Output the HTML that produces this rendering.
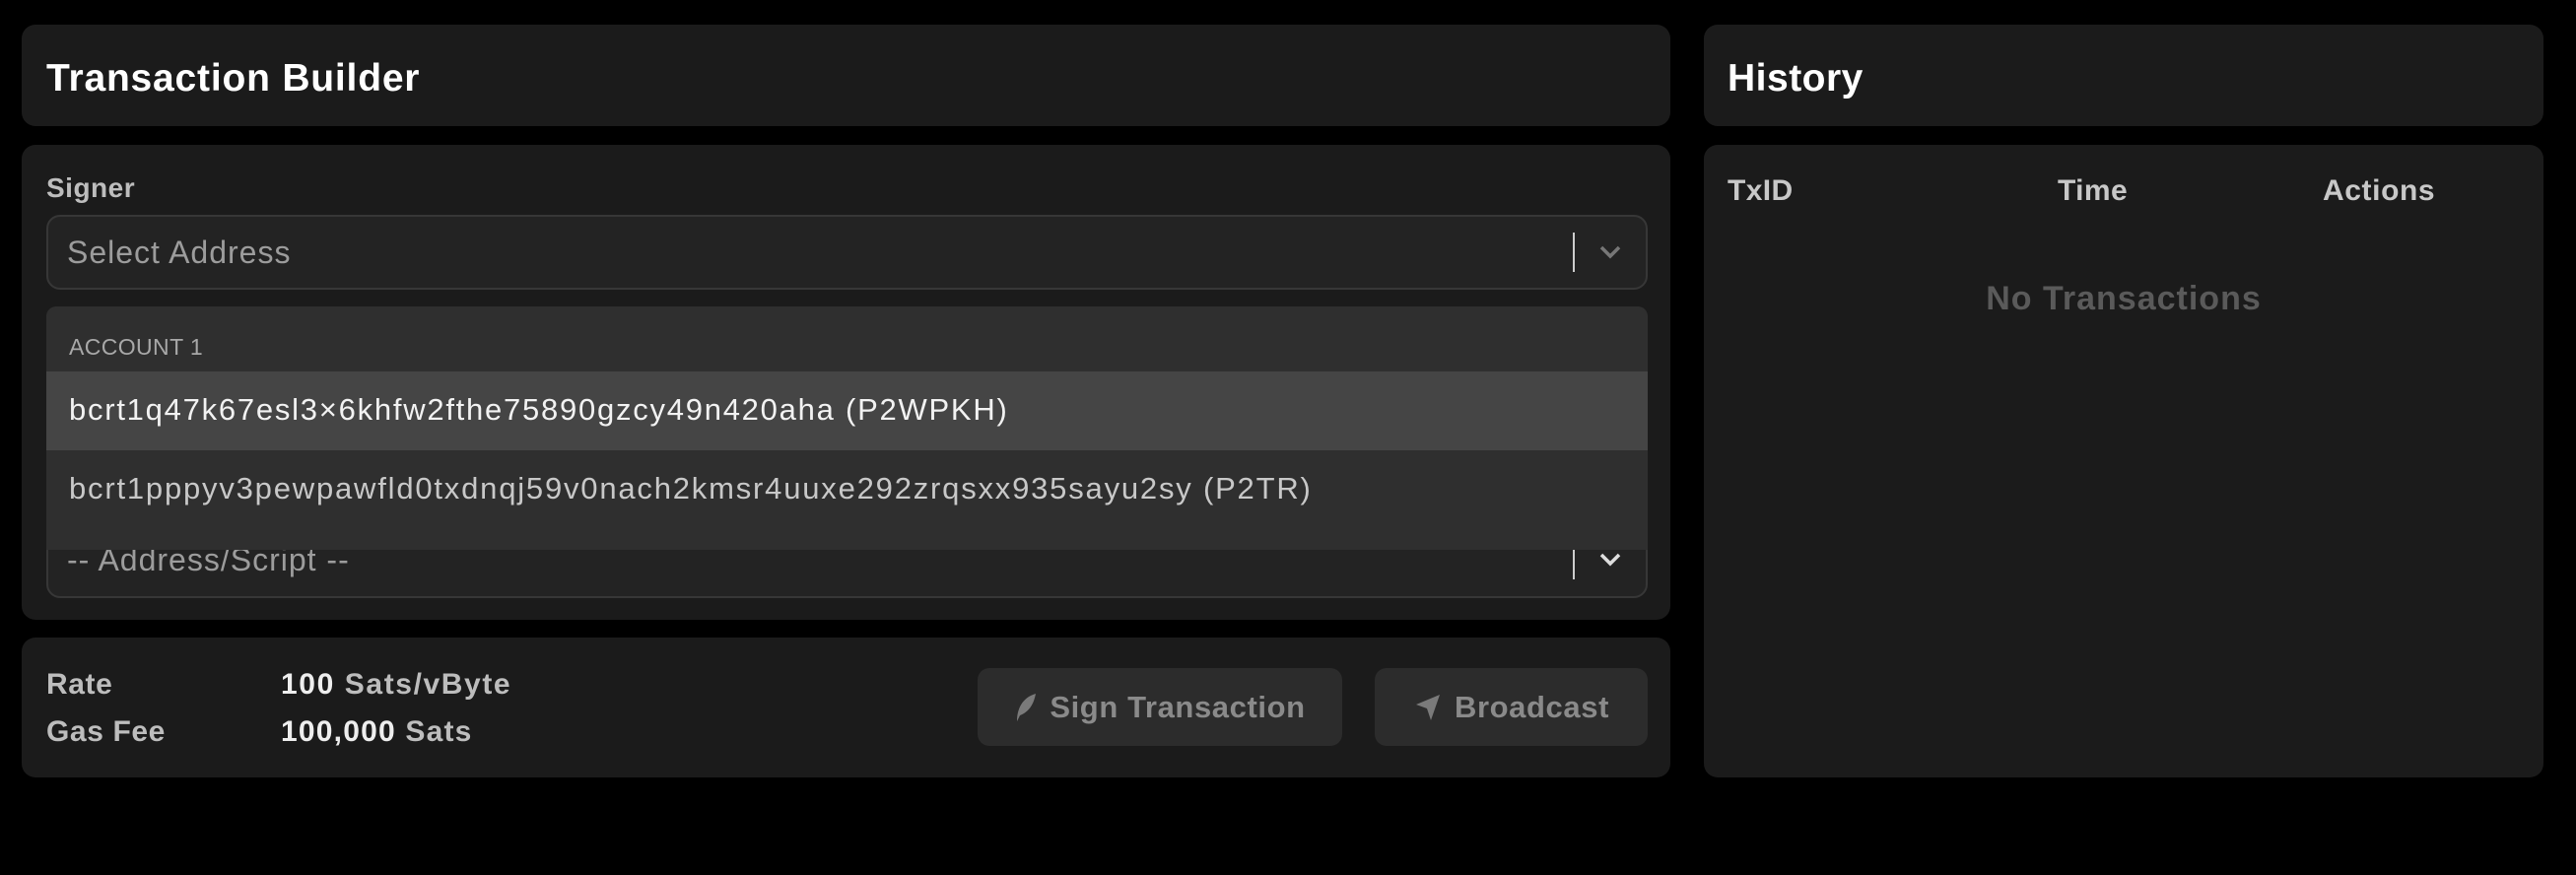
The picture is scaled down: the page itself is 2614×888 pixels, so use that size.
<!DOCTYPE html>
<html><head><meta charset="utf-8"><style>
*{box-sizing:border-box;margin:0;padding:0}
body{width:2614px;height:888px;background:#000;font-family:"Liberation Sans",sans-serif;position:relative;overflow:hidden;color:#fff}
.p{position:absolute;background:#1b1b1b;border-radius:14px}
.abs{position:absolute;white-space:nowrap}
.box{position:absolute;background:#232323;border:2px solid #373737;border-radius:14px}
.btn{position:absolute;background:#2c2c2c;border-radius:12px;color:#8a8a8a;font-weight:bold;font-size:31px;letter-spacing:0.6px;display:flex;align-items:center;justify-content:center;gap:12px}
</style></head><body>
<div class="p" style="left:22px;top:25px;width:1673px;height:103px"></div>
<div class="abs" style="left:47px;top:58px;font-size:39px;font-weight:bold;letter-spacing:0.8px">Transaction Builder</div>
<div class="p" style="left:22px;top:147px;width:1673px;height:482px"></div>
<div class="abs" style="left:47px;top:175px;font-size:28px;font-weight:bold;color:#bdbdbd;letter-spacing:0.5px">Signer</div>
<div class="box" style="left:47px;top:218px;width:1625px;height:76px"></div>
<div class="abs" style="left:68px;top:238px;font-size:32px;color:#9c9c9c;letter-spacing:1px">Select Address</div>
<div class="abs" style="left:1596px;top:236px;width:2px;height:40px;background:#ccc"></div>
<svg class="abs" style="left:1620px;top:246px" width="28" height="20" viewBox="0 0 28 20"><path d="M5 5l9 9 9-9" stroke="#777" stroke-width="3.5" fill="none"/></svg>
<div class="box" style="left:47px;top:535px;width:1625px;height:72px"></div>
<div class="abs" style="left:68px;top:550px;font-size:32px;color:#9c9c9c;letter-spacing:1px">-- Address/Script --</div>
<div class="abs" style="left:1596px;top:552px;width:2px;height:36px;background:#ccc"></div>
<svg class="abs" style="left:1620px;top:558px" width="28" height="20" viewBox="0 0 28 20"><path d="M5 5l9 9 9-9" stroke="#ddd" stroke-width="3.5" fill="none"/></svg>
<div class="abs" style="left:47px;top:311px;width:1625px;height:247px;background:#2f2f2f;border-radius:10px 10px 0 0;overflow:hidden">
 <div class="abs" style="left:23px;top:28px;font-size:23px;color:#a8a8a8;letter-spacing:0.4px">ACCOUNT 1</div>
 <div class="abs" style="left:0;top:66px;width:1625px;height:80px;background:#454545"></div>
 <div class="abs" style="left:23px;top:87px;font-size:31px;color:#f2f2f2;letter-spacing:1.75px">bcrt1q47k67esl3×6khfw2fthe75890gzcy49n420aha (P2WPKH)</div>
 <div class="abs" style="left:23px;top:167px;font-size:31px;color:#c8c8c8;letter-spacing:1.8px">bcrt1pppyv3pewpawfld0txdnqj59v0nach2kmsr4uuxe292zrqsxx935sayu2sy (P2TR)</div>
</div>
<div class="p" style="left:22px;top:647px;width:1673px;height:142px"></div>
<div class="abs" style="left:47px;top:678px;font-size:30px;font-weight:bold;color:#bdbdbd;letter-spacing:0.6px">Rate</div>
<div class="abs" style="left:47px;top:726px;font-size:30px;font-weight:bold;color:#bdbdbd;letter-spacing:0.6px">Gas Fee</div>
<div class="abs" style="left:285px;top:678px;font-size:30px;font-weight:bold;color:#eee;letter-spacing:1.6px">100 <span style="color:#bdbdbd">Sats/vByte</span></div>
<div class="abs" style="left:285px;top:726px;font-size:30px;font-weight:bold;color:#eee;letter-spacing:1.2px">100,000 <span style="color:#bdbdbd">Sats</span></div>
<div class="btn" style="left:992px;top:678px;width:370px;height:79px"><svg width="24" height="32" viewBox="0 0 24 32"><path d="M3 30C3 18 8 6 22 2C20 12 16 20 6 24L3 30Z" fill="#7a7a7a"/></svg>Sign Transaction</div>
<div class="btn" style="left:1395px;top:678px;width:277px;height:79px"><svg width="30" height="32" viewBox="0 0 30 32"><path d="M27 3L3 13l11 4 4 12z" fill="#7a7a7a"/></svg>Broadcast</div>
<div class="p" style="left:1729px;top:25px;width:852px;height:103px"></div>
<div class="abs" style="left:1753px;top:58px;font-size:39px;font-weight:bold;letter-spacing:0.5px">History</div>
<div class="p" style="left:1729px;top:147px;width:852px;height:642px"></div>
<div class="abs" style="left:1753px;top:177px;font-size:30px;font-weight:bold;color:#c8c8c8;letter-spacing:0.4px">TxID</div>
<div class="abs" style="left:2088px;top:177px;font-size:30px;font-weight:bold;color:#c8c8c8;letter-spacing:0.4px">Time</div>
<div class="abs" style="left:2357px;top:177px;font-size:30px;font-weight:bold;color:#c8c8c8;letter-spacing:0.6px">Actions</div>
<div class="abs" style="left:1729px;width:852px;text-align:center;top:284px;font-size:34px;font-weight:bold;color:#5a5a5a;letter-spacing:1px">No Transactions</div>
</body></html>
